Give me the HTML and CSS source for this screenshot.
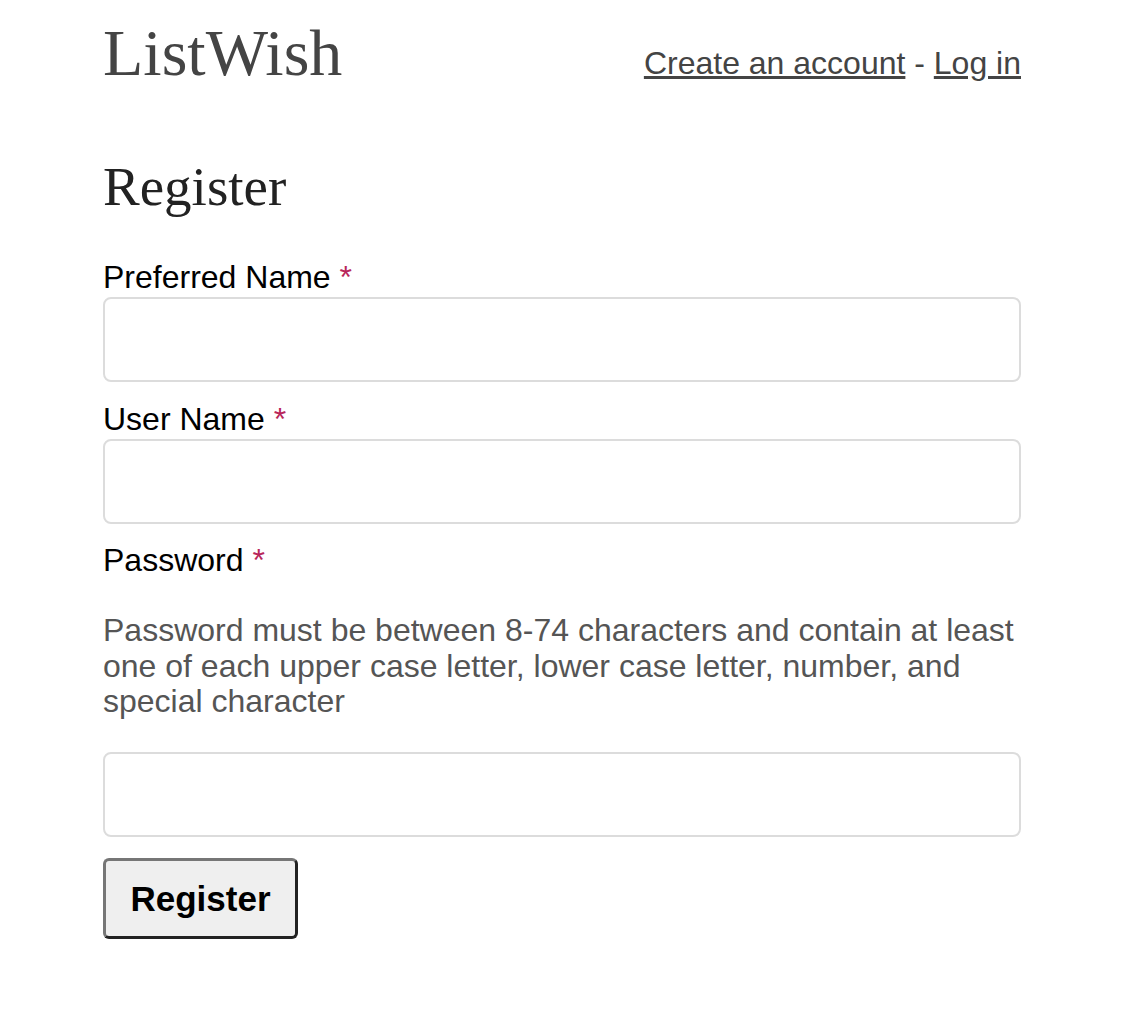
FILE: index.html
```html
<!DOCTYPE html>
<html>
<head>
<meta charset="utf-8">
<title>ListWish - Register</title>
<link rel="stylesheet" href="styles.css">
</head>
<body>
<div class="page">
  <header class="header">
    <div class="logo">ListWish</div>
    <nav class="nav"><a href="#">Create an account</a> - <a href="#">Log in</a></nav>
  </header>
  <h1 class="title">Register</h1>
  <form class="form">
    <div class="field">
      <label class="label">Preferred Name <span class="req">*</span></label>
      <input class="input" type="text">
    </div>
    <div class="field">
      <label class="label">User Name <span class="req">*</span></label>
      <input class="input" type="text">
    </div>
    <div class="field">
      <label class="label">Password <span class="req">*</span></label>
      <p class="help">Password must be between 8-74 characters and contain at least one of each upper case letter, lower case letter, number, and special character</p>
      <input class="input" type="password">
    </div>
    <button class="btn" type="button">Register</button>
  </form>
</div>
</body>
</html>
```

FILE: styles.css
```css
html, body {
  margin: 0;
  padding: 0;
  background: #ffffff;
}
body {
  font-family: "Liberation Sans", Arial, sans-serif;
  color: #000;
}
.page {
  width: 918px;
  margin-left: 103px;
}
.header {
  display: flex;
  justify-content: space-between;
  align-items: flex-start;
  height: 130px;
}
.logo {
  font-family: "Liberation Serif", "Times New Roman", serif;
  font-size: 66px;
  color: #444;
  line-height: 1;
  margin-top: 20px;
}
.nav {
  font-size: 32px;
  color: #444;
  margin-top: 47px;
  line-height: 1;
}
.nav a {
  color: #444;
  text-decoration: underline;
}
.title {
  font-family: "Liberation Serif", "Times New Roman", serif;
  font-weight: normal;
  font-size: 55px;
  color: #222;
  margin: 29px 0 45px;
  line-height: 1;
}
.form {
  display: flex;
  flex-direction: column;
}
.field {
  display: flex;
  flex-direction: column;
  margin-bottom: 18.5px;
}
.label {
  font-size: 32px;
  line-height: 36px;
  margin-bottom: 2px;
}
.req {
  color: #b8265a;
}
.help {
  color: #555;
  font-size: 32px;
  line-height: 35.5px;
  margin: 33px 0 32px;
}
.input {
  box-sizing: border-box;
  width: 918px;
  height: 85px;
  border: 2px solid #dcdcdc;
  border-radius: 8px;
  background: #fff;
  margin: 0;
}
.btn {
  box-sizing: border-box;
  width: 195px;
  height: 81px;
  font-family: "Liberation Sans", Arial, sans-serif;
  font-weight: bold;
  font-size: 35px;
  color: #000;
  background: #efefef;
  border: 3px solid;
  border-color: #767676 #222 #222 #767676;
  border-radius: 6px;
  margin-top: 3px;
  padding: 0;
}
```
